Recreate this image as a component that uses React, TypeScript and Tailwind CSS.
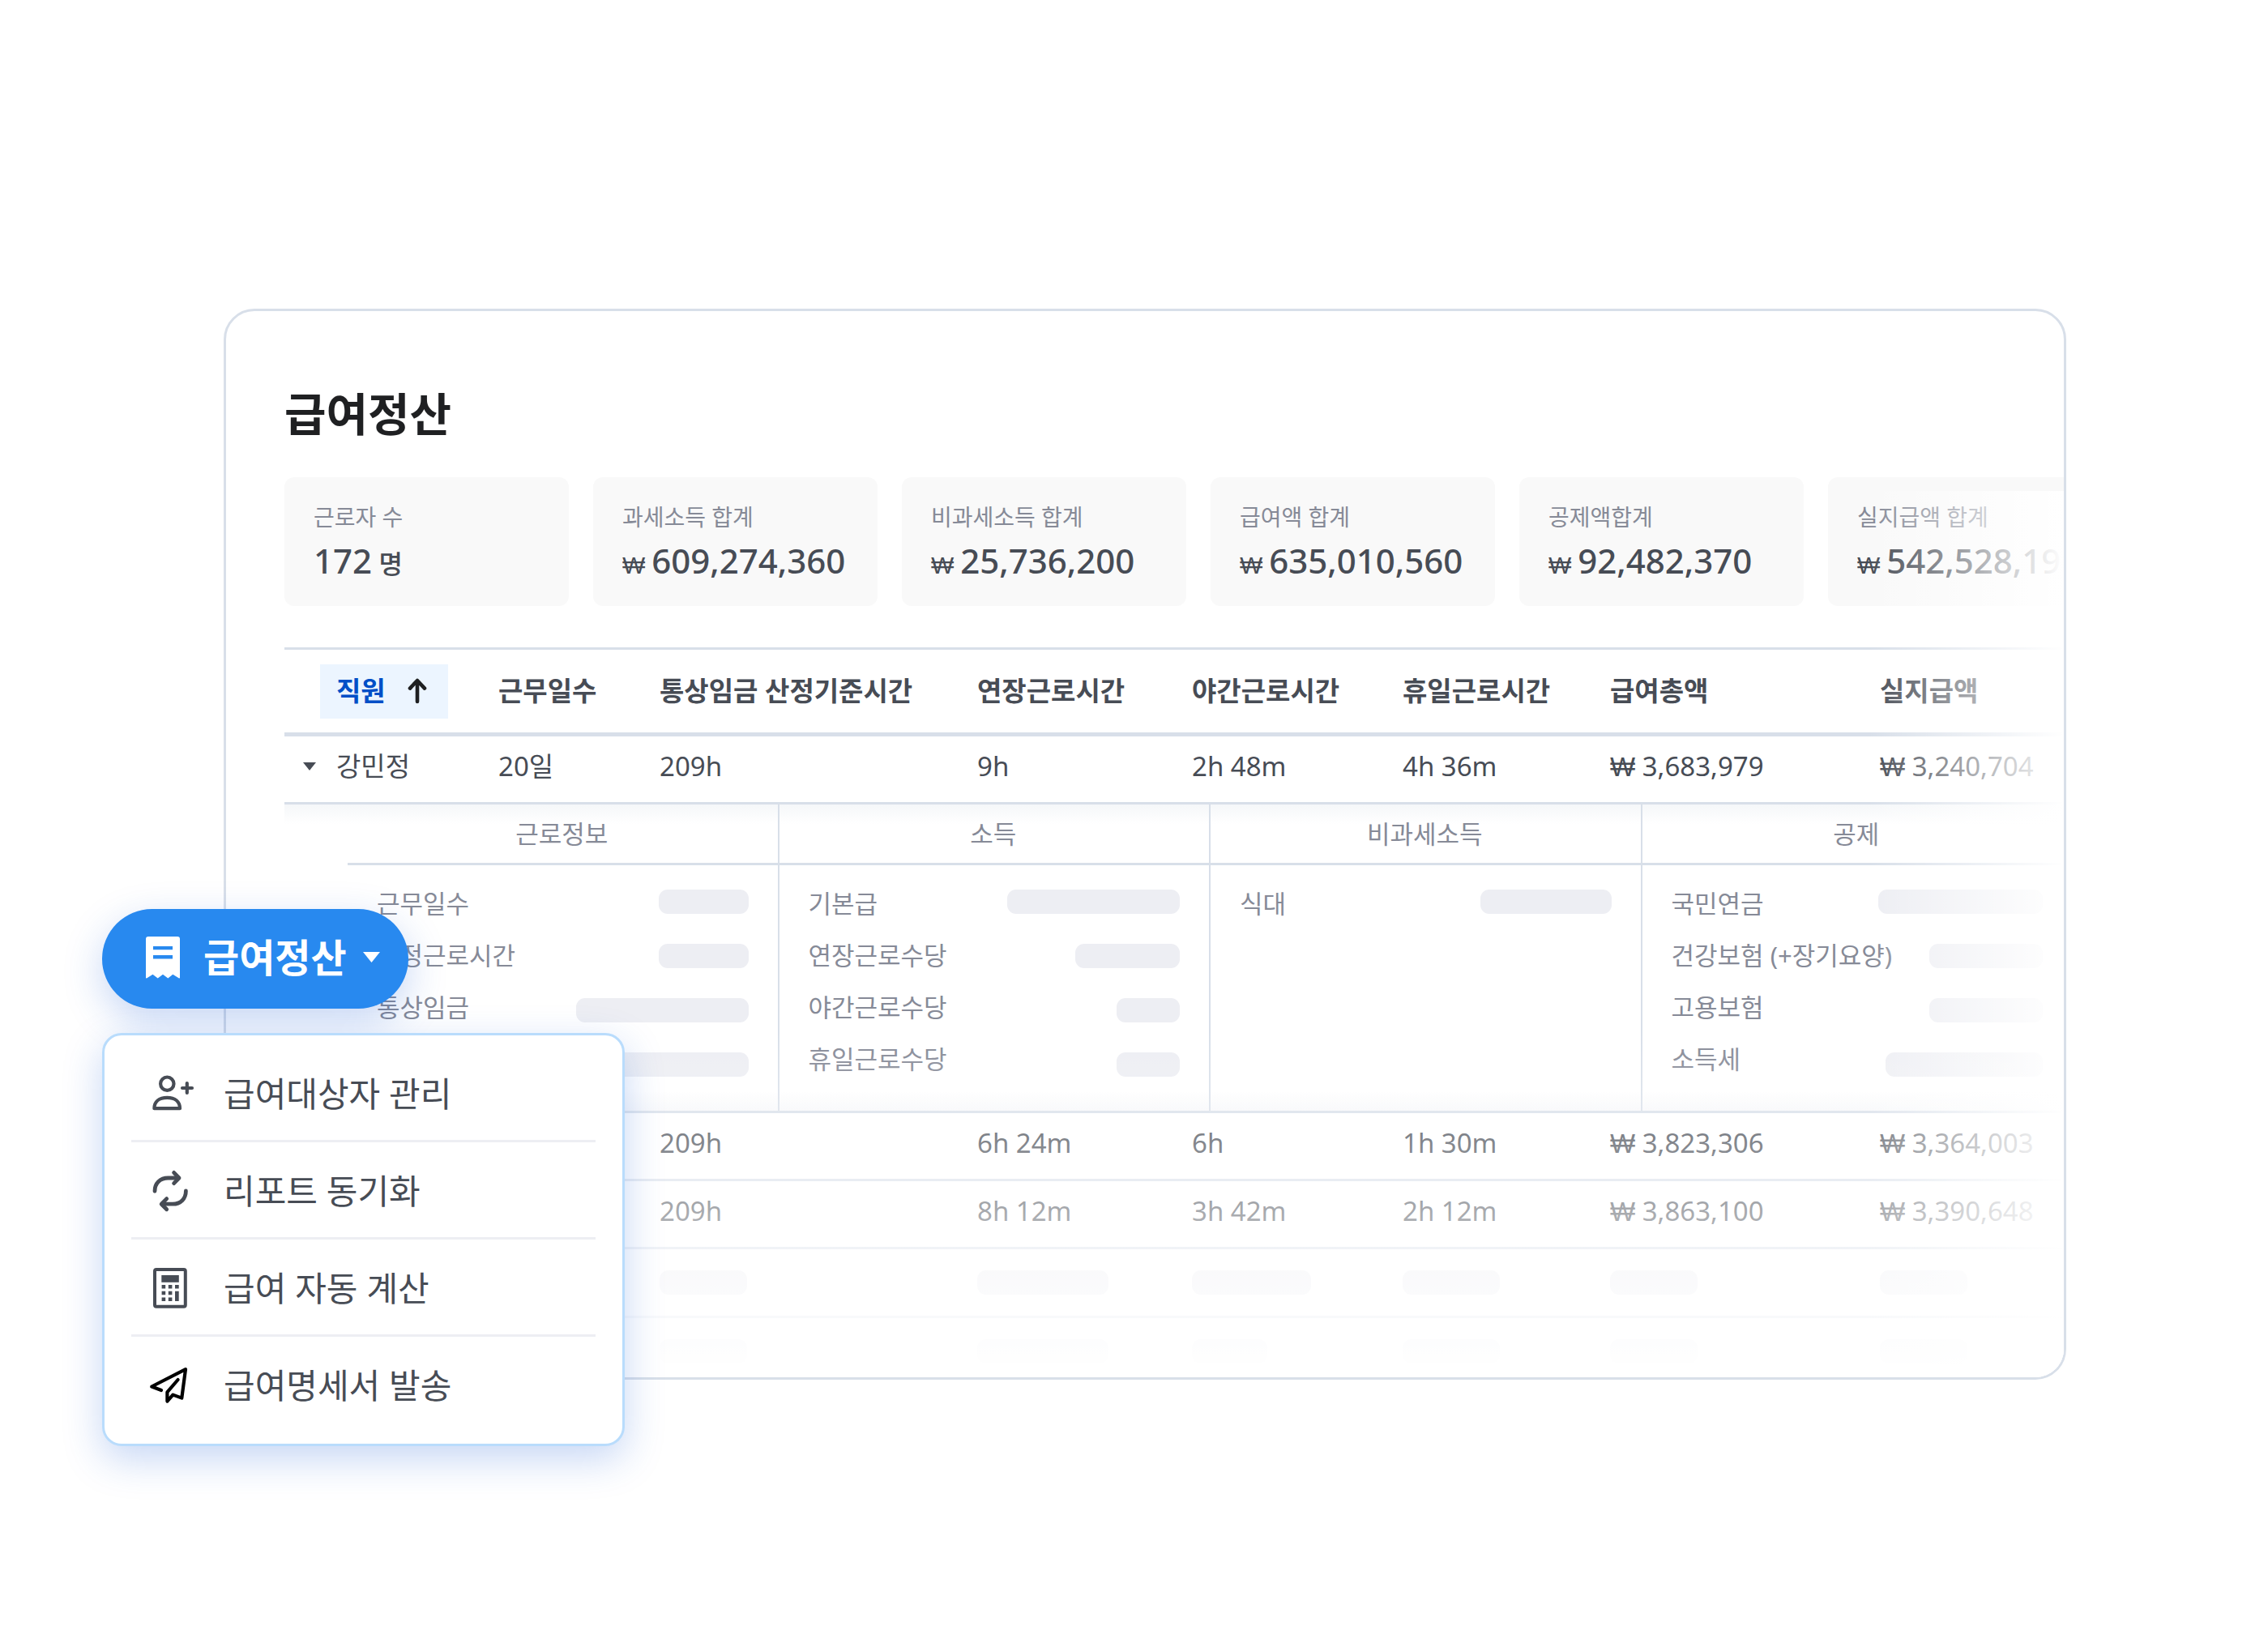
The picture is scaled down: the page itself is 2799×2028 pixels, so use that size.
import { useState } from 'react';
import type { ReactNode } from 'react';

interface Stat {
  label: string;
  value: string;
  currency?: boolean;
  unit?: string;
}

interface DetailGroup {
  title: string;
  labels: string[];
  bars: string[];
}

const STATS: Stat[] = [
  { label: '근로자 수', value: '172', unit: '명' },
  { label: '과세소득 합계', value: '609,274,360', currency: true },
  { label: '비과세소득 합계', value: '25,736,200', currency: true },
  { label: '급여액 합계', value: '635,010,560', currency: true },
  { label: '공제액합계', value: '92,482,370', currency: true },
  { label: '실지급액 합계', value: '542,528,190', currency: true },
];

const COLUMNS = ['근무일수', '통상임금 산정기준시간', '연장근로시간', '야간근로시간', '휴일근로시간', '급여총액', '실지급액'];

const DETAILS: DetailGroup[] = [
  { title: '근로정보', labels: ['근무일수', '소정근로시간', '통상임금'], bars: ['w-[111px]', 'w-[111px]', 'w-[213px]', 'w-[213px]'] },
  { title: '소득', labels: ['기본급', '연장근로수당', '야간근로수당', '휴일근로수당'], bars: ['w-[213px]', 'w-[129px]', 'w-[78px]', 'w-[78px]'] },
  { title: '비과세소득', labels: ['식대'], bars: ['w-[162px]'] },
  { title: '공제', labels: ['국민연금', '건강보험 (+장기요양)', '고용보험', '소득세'], bars: ['w-[203px]', 'w-[140px]', 'w-[140px]', 'w-[194px]'] },
];

const FIRST_ROW = ['20일', '209h', '9h', '2h 48m', '4h 36m', '₩ 3,683,979', '₩ 3,240,704'];

const ROWS = [
  ['', '', '209h', '6h 24m', '6h', '1h 30m', '₩ 3,823,306', '₩ 3,364,003'],
  ['', '', '209h', '8h 12m', '3h 42m', '2h 12m', '₩ 3,863,100', '₩ 3,390,648'],
];

const LOADING_ROWS = [
  ['', '', 'w-[108px]', 'w-[162px]', 'w-[147px]', 'w-[120px]', 'w-[108px]', 'w-[108px]'],
  ['', '', 'w-[108px]', 'w-[162px]', 'w-[93px]', 'w-[120px]', 'w-[108px]', 'w-[108px]'],
];

function ReceiptIcon() {
  return (
    <svg width="42" height="52" viewBox="0 0 42 52" fill="currentColor" aria-hidden="true">
      <path fillRule="evenodd" d="M3 0H39Q42 0 42 3V50.5Q42 52 40.6 51.2L33.3 46.8L27.3 51.6L21 46.8L14.7 51.6L8.5 46.8L1.4 51.2Q0 52 0 50.5V3Q0 0 3 0ZM9 12V16.3H33V12ZM9 23V27.6H33V23Z" />
    </svg>
  );
}

function UserPlusIcon() {
  return (
    <svg width="60" height="60" viewBox="0 0 60 60" fill="none" stroke="currentColor" strokeWidth="4.2" strokeLinecap="round" strokeLinejoin="round" aria-hidden="true">
      <circle cx="26.3" cy="17.7" r="8.2" />
      <path d="M10.4 48.2C10.4 39.6 16.4 34.8 26.2 34.8S42 39.6 42 48.2Z" />
      <path d="M45 23H57M50.8 17V29" />
    </svg>
  );
}

function SyncIcon() {
  return (
    <svg width="60" height="60" viewBox="0 0 60 60" fill="none" stroke="currentColor" strokeWidth="4.8" strokeLinecap="round" strokeLinejoin="round" aria-hidden="true">
      <path d="M11 30.3C11 20.5 17.5 14 27.5 14H40" />
      <path d="M34.6 7.4L41 14L34.6 20.6" />
      <path d="M49.4 30C49.4 39.6 43 46.2 33 46.2H20" />
      <path d="M25.7 39.6L19.2 46.2L25.7 52.8" />
    </svg>
  );
}

function CalculatorIcon() {
  return (
    <svg width="60" height="60" viewBox="0 0 60 60" fill="currentColor" aria-hidden="true">
      <rect x="11" y="7" width="37.8" height="45.8" rx="2" fill="none" stroke="currentColor" strokeWidth="4" />
      <path d="M19.3 14H40.8V22.8H19.3Z" />
      <path d="M19.6 26H24.2V30.4H19.6ZM27.8 26H32.4V30.4H27.8ZM36 26H40.7V30.4H36Z" />
      <path d="M19.6 33.8H24.2V38.2H19.6ZM27.8 33.8H32.4V38.2H27.8ZM36 33.8H40.7V46H36Z" />
      <path d="M19.6 41.6H24.2V46H19.6ZM27.8 41.6H32.4V46H27.8Z" />
    </svg>
  );
}

function SendIcon() {
  return (
    <svg width="60" height="60" viewBox="0 0 60 60" fill="none" stroke="#000" strokeWidth="4.2" strokeLinecap="round" strokeLinejoin="round" aria-hidden="true">
      <path d="M19 36L7.2 31.5L49 10.2L44.3 45.6L33.4 41.6L26.4 49.6V38.4L39.6 23" />
    </svg>
  );
}

const MENU: { label: string; icon: ReactNode }[] = [
  { label: '급여대상자 관리', icon: <UserPlusIcon /> },
  { label: '리포트 동기화', icon: <SyncIcon /> },
  { label: '급여 자동 계산', icon: <CalculatorIcon /> },
  { label: '급여명세서 발송', icon: <SendIcon /> },
];

function Bar({ width }: { width: string }) {
  return <div className={`h-[30px] rounded-[11px] bg-[#edeef3] ${width}`} />;
}

function Won() {
  return <span className="font-['Open_Sans',sans-serif] leading-none">₩</span>;
}

function Cell({ text }: { text: string }) {
  return (
    <td className="h-[84px] border-b-3 border-[#d8dfe9] p-0 pb-2">
      {text.startsWith('₩') ? <><Won />{text.slice(1)}</> : text}
    </td>
  );
}

function StatCard({ stat }: { stat: Stat }) {
  return (
    <div className="w-[351px] shrink-0 rounded-xl bg-[#f9f9f9] px-9 py-7">
      <div className="mb-[5px] text-[28px] leading-[42px] text-[#868a97]">{stat.label}</div>
      <div className="h-14 whitespace-nowrap text-[42px] leading-[56px] font-medium text-[#474c55]">
        {stat.currency && <span className="text-[30px] leading-none"><Won /> </span>}
        {stat.value}
        {stat.unit && <span className="text-[32px] leading-none"> {stat.unit}</span>}
      </div>
    </div>
  );
}

function DetailPanel() {
  return (
    <div className="bg-[linear-gradient(to_bottom,#f5f7f9,#fff_24px,#fff_calc(100%-24px),#f7f8fa)] pl-[78px]">
      <div className="-mr-3 grid grid-cols-4">
        {DETAILS.map((group, i) => (
          <div key={group.title} className={i > 0 ? '-ml-0.5 border-l-2 border-[#d8dfe9]' : ''}>
            <div className="h-[75px] border-b-3 border-[#d8dfe9] pr-1 text-center text-[31px] leading-[72px] text-[#868a97]">{group.title}</div>
            <div className="flex pr-[38px] pl-9">
              <ul className="min-w-0 flex-1 pt-[15px] pb-8">
                {group.labels.map((label) => (
                  <li key={label} className="h-16 whitespace-nowrap text-[31px] leading-[64px] text-[#868a97]">{label}</li>
                ))}
              </ul>
              <div className="flex flex-col items-end gap-[37px] pt-[30px]">
                {group.bars.map((bar, j) => <Bar key={j} width={bar} />)}
              </div>
            </div>
          </div>
        ))}
      </div>
    </div>
  );
}

export default function App() {
  const [menuOpen, setMenuOpen] = useState(true);
  const [expanded, setExpanded] = useState(true);

  return (
    <div lang="ko" className="relative min-h-screen bg-white pt-[381px] pr-[249px] pb-20 pl-[276px] font-['Noto_Sans','Noto_Sans_CJK_KR',sans-serif] text-[#474c55]">
      <main className="relative overflow-hidden rounded-[38px] border-3 border-[#d8dfe9] pt-[84px] pl-[72px]">
        <h1 className="mb-[37px] text-[56px] leading-[84px] font-bold text-[#1f2022]">급여정산</h1>

        <div className="mb-[51px] flex gap-[30px]">
          {STATS.map((stat) => <StatCard key={stat.label} stat={stat} />)}
        </div>

        <table className="-mb-3 w-full table-fixed border-separate border-spacing-0 text-left text-[33px] leading-[48px] whitespace-nowrap">
          <colgroup>
            <col className="w-[264px]" />
            <col className="w-[199px]" />
            <col className="w-[392px]" />
            <col className="w-[265px]" />
            <col className="w-[260px]" />
            <col className="w-[256px]" />
            <col className="w-[333px]" />
            <col />
          </colgroup>
          <thead>
            <tr>
              <th className="h-[110px] border-t-3 border-b-5 border-[#d8dfe9] p-0 pl-11">
                <button className="flex h-[67px] w-[158px] items-center justify-between bg-[#ecf5ff] pr-[26px] pl-5 font-bold text-[#004fc7]">
                  직원
                  <svg width="24" height="32" viewBox="0 0 24 32" fill="none" stroke="#1f2022" strokeWidth="4.6" strokeLinecap="round" strokeLinejoin="round" aria-hidden="true">
                    <path d="M12 29V4M3 12.6L12 3L21 12.6" />
                  </svg>
                </button>
              </th>
              {COLUMNS.map((column) => (
                <th key={column} className="border-t-3 border-b-5 border-[#d8dfe9] p-0 font-bold">{column}</th>
              ))}
            </tr>
          </thead>
          <tbody>
            <tr>
              <td className="h-[84px] border-b-3 border-[#d8dfe9] p-0 pb-2 pl-[23px]">
                <button className="flex items-center gap-[25px]" aria-expanded={expanded} onClick={() => setExpanded(!expanded)}>
                  <svg width="16" height="10" viewBox="0 0 16 10" fill="currentColor" aria-hidden="true"><path d="M0 0H16L8 10Z" /></svg>
                  강민정
                </button>
              </td>
              {FIRST_ROW.map((cell) => <Cell key={cell} text={cell} />)}
            </tr>
            {expanded && (
              <tr>
                <td colSpan={8} className="border-b-3 border-[#d8dfe9] p-0"><DetailPanel /></td>
              </tr>
            )}
            {ROWS.map((row, i) => (
              <tr key={i}>
                {row.map((cell, j) => <Cell key={j} text={cell} />)}
              </tr>
            ))}
            {LOADING_ROWS.map((row, i) => (
              <tr key={i}>
                {row.map((bar, j) => <td key={j} className="h-[85px] border-b-3 border-[#d8dfe9] p-0">{bar && <Bar width={bar} />}</td>)}
              </tr>
            ))}
          </tbody>
        </table>

        {/* edge fades */}
        <div className="pointer-events-none absolute top-[222px] right-0 bottom-0 w-[242px] bg-linear-to-r from-white/0 to-white" />
        <div className="pointer-events-none absolute inset-x-0 bottom-0 h-[431px] bg-linear-to-b from-white/0 to-white" />
      </main>

      <div className="absolute top-[1122px] left-[126px]">
        <button
          className="flex h-[123px] w-[378px] items-center rounded-full bg-[#2889ef] pb-1 pl-[54px] text-[48px] leading-[72px] font-bold text-white shadow-[0_16px_48px_rgba(30,95,215,0.25)]"
          aria-expanded={menuOpen}
          onClick={() => setMenuOpen(!menuOpen)}
        >
          <ReceiptIcon />
          <span className="ml-[29px]">급여정산</span>
          <svg className="ml-5" width="21" height="13" viewBox="0 0 21 13" fill="currentColor" aria-hidden="true"><path d="M0 0H21L10.5 13Z" /></svg>
        </button>

        {menuOpen && (
          <ul className="mt-[30px] w-[645px] rounded-3xl border-3 border-[#b9dcfc] bg-white px-[33px] pt-3 pb-[15px] shadow-[0_16px_48px_rgba(30,95,215,0.25)]">
            {MENU.map((item) => (
              <li key={item.label} className="h-[120px] border-b-3 border-[#edeef3] last:h-[117px] last:border-b-0">
                <button className="flex h-full w-full items-center gap-9 pt-0.5 pl-[18px] text-left text-[42px] leading-[60px]">
                  {item.icon}
                  {item.label}
                </button>
              </li>
            ))}
          </ul>
        )}
      </div>
    </div>
  );
}
